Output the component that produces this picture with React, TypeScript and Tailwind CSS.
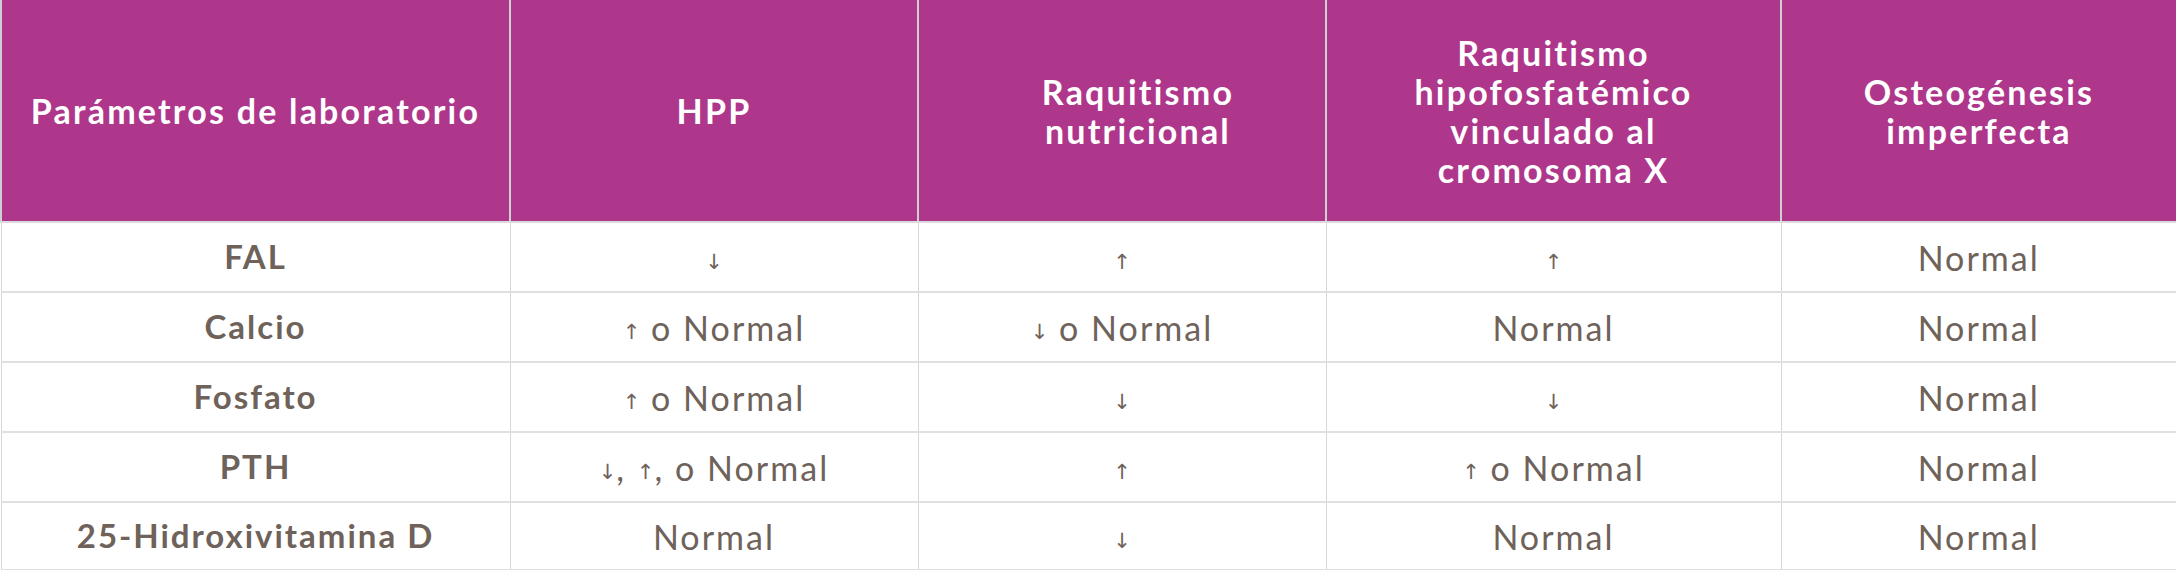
import React from "react";

const up = "↑";
const down = "↓";

type Cell = React.ReactNode;

const Arrow = ({ d }: { d: "u" | "d" }) => (
  <span className="inline-block align-[2px] tracking-normal text-[21px] font-['DejaVu_Sans',sans-serif]">{d === "u" ? up : down}</span>
);

const rows: { label: string; cells: Cell[] }[] = [
  {
    label: "FAL",
    cells: [<Arrow d="d" />, <Arrow d="u" />, <Arrow d="u" />, "Normal"],
  },
  {
    label: "Calcio",
    cells: [
      <><Arrow d="u" /> o Normal</>,
      <><Arrow d="d" /> o Normal</>,
      "Normal",
      "Normal",
    ],
  },
  {
    label: "Fosfato",
    cells: [<><Arrow d="u" /> o Normal</>, <Arrow d="d" />, <Arrow d="d" />, "Normal"],
  },
  {
    label: "PTH",
    cells: [
      <><Arrow d="d" />, <Arrow d="u" />, o Normal</>,
      <Arrow d="u" />,
      <><Arrow d="u" /> o Normal</>,
      "Normal",
    ],
  },
  {
    label: "25-Hidroxivitamina D",
    cells: ["Normal", <Arrow d="d" />, "Normal", "Normal"],
  },
];

const headerPad = [
  "px-4 whitespace-nowrap",
  "px-[60px]",
  "pl-[84px] pr-[52px]",
  "px-[60px]",
  "px-[60px]",
];

const headers = [
  "Parámetros de laboratorio",
  "HPP",
  "Raquitismo nutricional",
  "Raquitismo hipofosfatémico vinculado al cromosoma X",
  "Osteogénesis imperfecta",
];

export default function App() {
  return (
    <div className="w-[2176px] h-[570px] bg-white font-['Lato',sans-serif] overflow-hidden">
      <table className="w-full table-fixed border-collapse">
        <colgroup>
          <col className="w-[509px]" />
          <col className="w-[408px]" />
          <col className="w-[408px]" />
          <col className="w-[455px]" />
          <col className="w-[396px]" />
        </colgroup>
        <thead>
          <tr className="h-[222px] bg-[#ae378b]">
            {headers.map((h, i) => (
              <th
                key={i}
                className={`border-x-2 border-x-[#cfcfcf] border-b-2 border-b-[#dcdcdc] text-white font-bold text-[34px] leading-[39px] tracking-[0.065em] text-center align-middle ${headerPad[i]}`}
              >
                {h}
              </th>
            ))}
          </tr>
        </thead>
        <tbody>
          {rows.map((r, ri) => (
            <tr key={ri} className={ri === rows.length - 1 ? "h-[68px]" : "h-[70px]"}>
              <td className="border-x border-x-[#d6d6d6] border-y-2 border-y-[#e0e0e0] text-center align-middle font-bold text-[33px] tracking-[0.06em] text-[#6e625a]">
                {r.label}
              </td>
              {r.cells.map((c, ci) => (
                <td
                  key={ci}
                  className="border-x border-x-[#d6d6d6] border-y-2 border-y-[#e0e0e0] last:border-r-2 text-center align-middle text-[34px] tracking-[0.06em] text-[#6e625a] font-normal"
                >
                  {c}
                </td>
              ))}
            </tr>
          ))}
        </tbody>
      </table>
    </div>
  );
}
